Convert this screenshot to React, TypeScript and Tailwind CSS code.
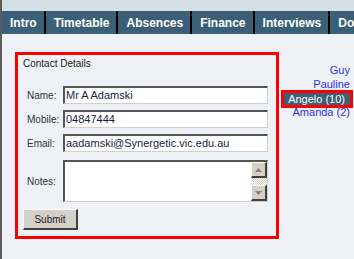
const tabs = ['Intro', 'Timetable', 'Absences', 'Finance', 'Interviews', 'Documents']

const fields = [
  { label: 'Name:', value: 'Mr A Adamski' },
  { label: 'Mobile:', value: '04847444' },
  { label: 'Email:', value: 'aadamski@Synergetic.vic.edu.au' },
]

function ScrollButton({ down }: { down?: boolean }) {
  return (
    <div className="h-[16px] w-[16px] bg-[#d4d0c8] border-t border-l border-t-white border-l-white border-r-2 border-b-2 border-r-[#404040] border-b-[#404040] flex items-center justify-center">
      <svg width="7" height="4" viewBox="0 0 7 4">
        <path d={down ? 'M0 0H7L3.5 4Z' : 'M0 4H7L3.5 0Z'} fill="#808080" />
      </svg>
    </div>
  )
}

export default function App() {
  return (
    <div className="w-[354px] h-[259px] overflow-hidden bg-[#eef2f6] border-l-2 border-[#5c5c5c] font-['Liberation_Sans',Arial,sans-serif]">
      <div className="h-[11px] bg-[#d4e0e6]" />

      {/* tabs */}
      <div className="flex h-[23px] bg-[#3a5f77] whitespace-nowrap">
        {tabs.map((tab) => (
          <div
            key={tab}
            className="flex items-center pl-2 pr-[7px] border-r-2 border-black text-white font-bold text-[12px]"
          >
            {tab}
          </div>
        ))}
      </div>

      <div className="flex pt-[18px]">
        {/* contact form */}
        <div className="ml-[13px] w-[264px] h-[187px] shrink-0 border-[3px] border-[#ff0000] pt-[3px] pl-[5px]">
          <div className="text-[10px] leading-[12px] text-[#222]">Contact Details</div>

          <div className="mt-[16px] flex flex-col gap-[6px]">
            {fields.map((f) => (
              <div key={f.label} className="flex items-center">
                <div className="w-[40px] pl-[4px] text-[10px] text-[#333]">{f.label}</div>
                <div className="w-[205px] h-[18px] bg-white border-t-2 border-l-2 border-[#555] border-r border-b border-r-[#d4d0c8] border-b-[#d4d0c8] pl-[1px] text-[11px] leading-[15px] text-[#1c1c3c] whitespace-nowrap overflow-hidden">
                  {f.value}
                </div>
              </div>
            ))}
          </div>

          <div className="mt-[8px] flex items-center">
            <div className="w-[40px] pl-[4px] text-[10px] text-[#333]">Notes:</div>
            <div className="w-[205px] h-[42px] flex bg-white border-t-2 border-l-2 border-[#555] border-r border-b border-r-[#d4d0c8] border-b-[#d4d0c8]">
              <div className="flex-1" />
              <div className="w-[16px] flex flex-col">
                <ScrollButton />
                <div className="flex-1 bg-[repeating-conic-gradient(#d4d0c8_0_25%,#ffffff_0_50%)] bg-[length:2px_2px]" />
                <ScrollButton down />
              </div>
            </div>
          </div>

          <button className="mt-[7px] w-[55px] h-[21px] bg-[#d4d0c8] border-t border-l border-t-white border-l-white border-r-2 border-b-2 border-r-[#404040] border-b-[#404040] text-[10px] text-[#222]">
            Submit
          </button>
        </div>

        {/* staff list */}
        <div className="flex-1 pr-[4px] pt-[11px] text-[11px] leading-[14px] text-right text-[#3030f0]">
          <div>Guy</div>
          <div>Pauline</div>
          <div className="mt-[2px] flex justify-end">
            <span className="h-[12px] leading-[12px] bg-[#3a5f77] text-white pl-[4px] pr-[5px] outline-3 outline-solid outline-[#ff0000]">
              Angelo (10)
            </span>
          </div>
          <div>Amanda (2)</div>
        </div>
      </div>
    </div>
  )
}
